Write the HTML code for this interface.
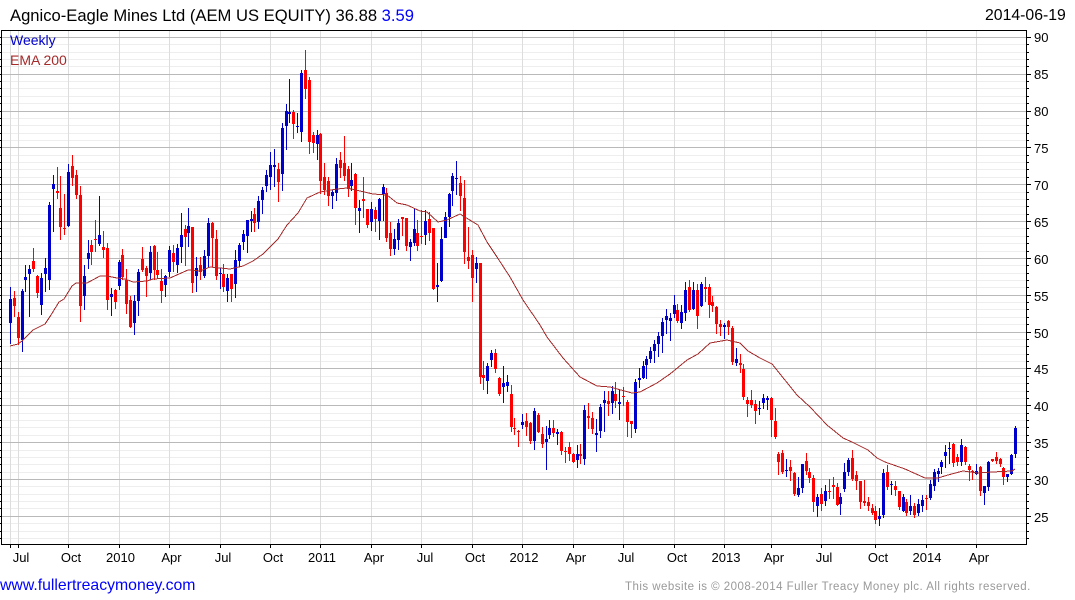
<!DOCTYPE html>
<html>
<head>
<meta charset="utf-8">
<title>Agnico-Eagle Mines Ltd</title>
<style>
html,body{margin:0;padding:0;background:#fff;width:1075px;height:600px;overflow:hidden}
svg{position:absolute;left:0;top:0;display:block}
text{font-family:"Liberation Sans",Arial,sans-serif}
</style>
</head>
<body>
<svg id="c" xmlns="http://www.w3.org/2000/svg" width="1075" height="600" viewBox="0 0 1075 600">
<g id="grid" shape-rendering="crispEdges"></g>
<g id="candles" shape-rendering="crispEdges"></g>
<polyline fill="none" stroke="#a52a2a" stroke-width="1" shape-rendering="crispEdges" points="10,346 18,344 22,341 33,330 45,324 51,315 59,302 64,299 72,286 76,283 87,283 100,276 107,276 117,278 125,279 133,282 147,281 153,279 170,278 188,270 200,271 210,267 230,269 243,266 253,261 263,254 278,239 287,225 298,213 307,198 320,192 337,189 347,188 360,191 373,194 387,195 397,203 407,205 420,211 427,212 438,222 447,220 460,214 473,222 478,225 487,242 497,257 510,277 523,300 540,325 547,337 563,358 580,377 597,386 610,387 632,393 640,392 657,383 670,374 687,360 698,354 710,343 727,340 740,343 748,351 760,358 772,364 797,395 810,407 827,425 843,438 852,442 868,450 877,458 885,462 905,469 925,478 938,478 948,475 963,471 978,473 992,472 1012,471 1015,469"/>
<g id="frame" shape-rendering="crispEdges">
<rect x="1" y="30" width="1026" height="1" fill="#000"/>
<rect x="1" y="544" width="1026" height="1" fill="#000"/>
<rect x="1" y="30" width="1" height="515" fill="#000"/>
<rect x="1026" y="30" width="1" height="515" fill="#000"/>
</g>
<text x="10" y="21" font-size="16.6" fill="#000">Agnico-Eagle Mines Ltd (AEM US EQUITY) 36.88 <tspan fill="#0000ff">3.59</tspan></text>
<text x="985" y="20" font-size="15.8" fill="#000">2014-06-19</text>
<text x="10" y="45" font-size="14" fill="#0000cc">Weekly</text>
<text x="10" y="65" font-size="14" fill="#a52a2a">EMA 200</text>
<g font-size="13" fill="#000">
<text x="1034" y="42">90</text>
<text x="1034" y="79">85</text>
<text x="1034" y="116">80</text>
<text x="1034" y="153">75</text>
<text x="1034" y="190">70</text>
<text x="1034" y="227">65</text>
<text x="1034" y="264">60</text>
<text x="1034" y="301">55</text>
<text x="1034" y="338">50</text>
<text x="1034" y="374">45</text>
<text x="1034" y="411">40</text>
<text x="1034" y="448">35</text>
<text x="1034" y="485">30</text>
<text x="1034" y="522">25</text>
</g>
<g font-size="13" fill="#000" text-anchor="middle">
<text x="21" y="562">Jul</text>
<text x="71" y="562">Oct</text>
<text x="120.5" y="562">2010</text>
<text x="171.5" y="562">Apr</text>
<text x="223" y="562">Jul</text>
<text x="273" y="562">Oct</text>
<text x="322" y="562">2011</text>
<text x="374" y="562">Apr</text>
<text x="425" y="562">Jul</text>
<text x="475" y="562">Oct</text>
<text x="524" y="562">2012</text>
<text x="576" y="562">Apr</text>
<text x="626" y="562">Jul</text>
<text x="677" y="562">Oct</text>
<text x="726" y="562">2013</text>
<text x="774" y="562">Apr</text>
<text x="824" y="562">Jul</text>
<text x="878" y="562">Oct</text>
<text x="927" y="562">2014</text>
<text x="979" y="562">Apr</text>
</g>
<text x="0" y="590" font-size="15.8" fill="#0000ff">www.fullertreacymoney.com</text>
<text x="625" y="590" font-size="11.5" fill="#999" letter-spacing=".47">This website is © 2008-2014 Fuller Treacy Money plc. All rights reserved.</text>
</svg>
<script>
(function(){
var NS="http://www.w3.org/2000/svg";
function R(p,x,y,w,h,f){var r=document.createElementNS(NS,"rect");r.setAttribute("x",x);r.setAttribute("y",y);r.setAttribute("width",w);r.setAttribute("height",h);r.setAttribute("fill",f);p.appendChild(r);}
var g=document.getElementById("grid"),fr=document.getElementById("frame"),k,y;
for(k=-1;k<70;k++){y=Math.floor(37.3+7.37*k);if(y<=30||y>=544)continue;
 if(((k%5)+5)%5==0)continue;
 R(g,2,y,1024,1,"#eeeeee");R(fr,0,y,1,1,"#000");R(fr,1027,y,2,1,"#000");}
var vx=[10,18,68,119,169,220,270,320,371,421,472,522,573,623,674,724,771,821,875,926,976];
vx.forEach(function(x){R(g,x,31,1,513,"#dddddd");R(fr,x,545,1,3,"#000");});
for(k=0;k<14;k++){y=Math.floor(37.3+36.85*k);R(g,2,y,1024,1,"#b9b9b9");R(fr,0,y,1,1,"#000");R(fr,1027,y,4,1,"#000");}
var d="b287,299,323,344 r291,298,306,317 r312,317,338,345 b289,291,340,352 b265,277,280,292 b265,269,274,317 r248,261,269,272 r275,276,293,298 b273,278,305,315 b258,268,274,292 b202,205,280,290 b175,184,189,232 r167,191,193,199 r176,208,227,240 r194,228,229,235 b164,172,226,227 r155,166,178,186 r170,175,195,199 r186,195,306,322 b265,276,296,310 b240,253,259,269 r240,245,252,265 r220,239,240,252 b196,235,244,246 r231,247,250,258 r243,248,300,310 b288,294,297,316 r289,290,302,309 b260,262,286,290 r249,255,277,280 r269,280,304,314 r296,300,327,328 b295,301,323,335 b269,272,301,316 r247,259,270,272 r266,268,276,297 b246,252,273,280 r245,246,270,280 r252,270,275,279 r269,281,291,303 b275,276,285,297 b246,250,272,277 r245,253,262,272 b244,248,265,273 b213,235,247,263 r225,229,237,266 b208,226,233,247 r227,227,283,293 b257,268,276,292 r257,265,272,280 b250,256,276,278 b218,223,256,267 r222,223,238,267 r230,239,276,280 b268,273,274,289 r264,274,287,292 b274,278,291,302 r274,274,289,302 b250,260,284,298 b243,245,261,267 b230,234,242,250 b220,220,236,253 b211,219,221,232 r208,214,223,232 b196,201,222,229 b187,190,200,214 b170,175,186,192 b152,165,177,190 b149,165,167,187 r163,169,182,202 b123,128,174,191 b104,111,126,150 b79,112,114,123 r110,112,124,139 b113,126,127,133 b70,73,132,142 r50,70,89,99 r77,80,142,154 r132,135,143,153 b130,135,144,160 r133,134,181,194 r163,177,190,195 r177,181,196,206 b190,192,196,209 b158,164,193,201 r152,160,168,178 r136,163,176,181 r166,169,189,197 b163,180,186,191 r173,174,208,225 b200,208,211,233 r177,199,201,218 r209,209,225,228 b202,209,222,231 r207,210,219,232 b198,199,221,240 b184,187,194,221 r188,193,238,242 r222,233,249,256 b229,239,249,255 b219,223,240,250 r217,217,219,236 r218,218,246,251 b239,242,247,261 b209,229,243,246 r220,233,246,251 r210,236,237,244 b210,221,235,245 r212,219,233,241 r228,228,289,290 b263,285,287,302 b227,239,281,282 b212,217,238,238 b193,194,217,227 b173,176,191,206 b161,178,179,195 r176,183,196,211 r180,198,252,264 r227,257,261,269 r250,255,278,302 b257,263,269,283 r263,263,377,384 r361,375,378,390 b363,366,381,394 b350,353,360,367 r349,353,369,373 r377,378,394,396 b366,383,387,403 b375,382,386,392 r385,394,427,432 r418,428,429,435 r430,431,432,447 b414,422,425,429 r413,421,427,436 r422,423,441,444 b408,411,441,450 r413,415,432,433 r427,434,444,448 b426,439,442,470 b420,428,435,439 r420,428,433,437 b429,432,434,445 r431,432,451,455 r447,451,452,463 r442,447,454,461 r453,454,462,463 b445,454,460,468 r444,454,456,464 b405,410,459,465 r403,416,418,429 r412,418,429,434 b419,433,435,452 b404,407,431,438 b391,400,403,432 r391,401,404,416 b386,391,403,414 r382,394,401,408 b390,402,404,420 r387,396,397,406 r400,402,422,437 r421,421,424,438 b379,382,429,433 b368,378,380,388 b361,366,378,379 b356,359,365,379 b347,351,359,363 b340,344,351,363 b332,336,344,357 b318,322,336,353 b309,316,320,334 b313,318,321,341 b295,305,314,318 r304,310,321,323 b305,312,323,329 b282,290,313,321 r280,287,310,312 b282,290,309,310 r284,290,316,329 b282,284,306,307 r277,287,289,302 r284,287,305,318 r296,302,306,312 r306,307,324,334 r320,324,327,336 b323,325,327,339 r320,321,327,335 r326,328,362,365 b348,359,363,366 r354,363,365,373 r364,369,397,400 r397,400,404,417 r390,400,405,408 r400,404,411,424 b401,408,409,415 b394,398,403,409 b396,398,400,410 r397,398,420,437 r408,421,437,439 r452,454,462,475 r450,453,472,474 b459,470,471,477 r460,467,471,481 r472,473,494,496 b477,488,495,497 b464,464,488,493 r453,461,471,475 r468,472,478,483 r475,478,502,512 b494,497,506,517 r488,494,504,511 b485,491,501,506 r479,491,492,499 r477,485,487,499 r483,487,505,506 b493,497,504,515 b463,472,489,492 b458,460,472,476 r450,458,479,481 r471,475,481,490 r481,481,502,509 r480,501,503,506 r497,502,506,511 r504,508,513,515 r506,511,520,524 b508,516,519,526 b469,473,515,518 r465,472,487,490 b481,484,485,495 r481,486,490,496 r491,491,507,510 b494,497,511,512 r499,502,513,516 b495,506,511,515 r503,506,515,518 b499,504,513,516 b495,500,506,512 r495,498,499,510 b480,484,498,500 b469,472,486,491 b468,471,474,482 b460,462,467,474 b445,452,456,468 b442,448,449,464 r443,444,463,467 r454,457,462,466 b439,445,462,466 r446,447,462,465 r464,466,470,481 r470,471,472,480 b464,471,474,475 r466,467,491,496 b486,486,493,505 b461,462,487,491 r459,459,461,462 r452,457,461,464 r458,459,464,467 r467,468,477,485 b474,474,477,482 b454,455,474,475 b426,428,454,458".split(" ");
var c=document.getElementById("candles");
d.forEach(function(s,i){
 var col=s[0]=="b"?"#0000cc":"#ff0000",v=s.slice(1).split(",").map(Number),x=Math.floor(10.45+3.881*i);
 R(c,x,v[0],1,Math.max(1,v[3]-v[0]),col);
 R(c,x-1,v[1],3,Math.max(1,v[2]-v[1]),col);
});
})();
</script>
</body>
</html>
